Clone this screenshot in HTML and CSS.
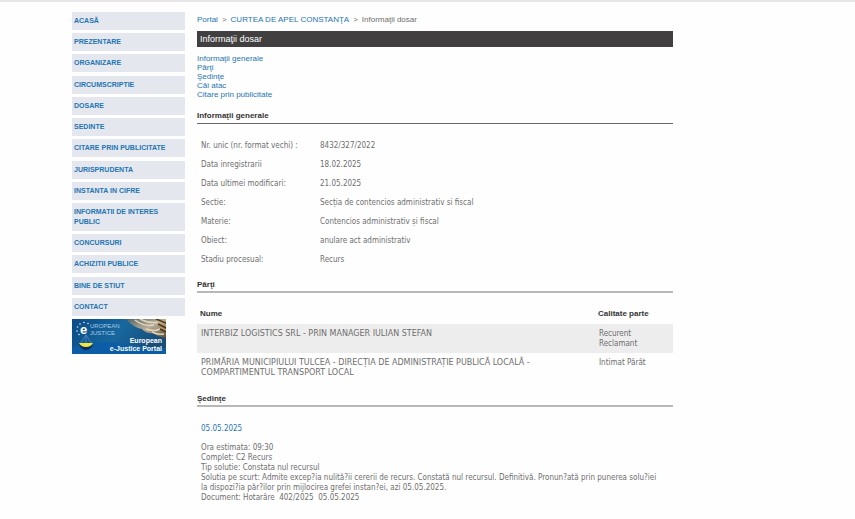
FILE: index.html
```html
<!DOCTYPE html>
<html lang="ro">
<head>
    <meta charset="UTF-8">
    <meta name="viewport" content="width=device-width, initial-scale=1.0">
    <title>Informaţii dosar</title>
    <link rel="stylesheet" href="styles.css">
</head>
<body>
    <div class="page">
        <div class="sidebar">
            <nav class="menu">
                <a href="#">ACASĂ</a>
                <a href="#">PREZENTARE</a>
                <a href="#">ORGANIZARE</a>
                <a href="#">CIRCUMSCRIPTIE</a>
                <a href="#">DOSARE</a>
                <a href="#">SEDINTE</a>
                <a href="#">CITARE PRIN PUBLICITATE</a>
                <a href="#">JURISPRUDENTA</a>
                <a href="#">INSTANTA IN CIFRE</a>
                <a href="#">INFORMATII DE INTERES PUBLIC</a>
                <a href="#">CONCURSURI</a>
                <a href="#">ACHIZITII PUBLICE</a>
                <a href="#">BINE DE STIUT</a>
                <a href="#">CONTACT</a>
            </nav>
            <a href="#" class="banner">
                <svg width="94" height="35" viewBox="0 0 94 35">
                    <defs>
                        <linearGradient id="sky" x1="0" y1="0" x2="1" y2="0.3">
                            <stop offset="0" stop-color="#0b4a86"/>
                            <stop offset="0.55" stop-color="#17689f"/>
                            <stop offset="1" stop-color="#174d79"/>
                        </linearGradient>
                        <linearGradient id="stone" x1="0" y1="0" x2="1" y2="1">
                            <stop offset="0" stop-color="#4f6466"/>
                            <stop offset="0.5" stop-color="#b9ae98"/>
                            <stop offset="1" stop-color="#5c4c34"/>
                        </linearGradient>
                    </defs>
                    <rect width="94" height="35" fill="url(#sky)"/>
                    <path d="M0 28 Q28 19 60 26 T94 28 V35 H0Z" fill="#0c5da5"/>
                    <path d="M54 0 H94 V19 Q86 18 81 14 Q74 15 70 10 Q62 9 54 0Z" fill="url(#stone)"/>
                    <path d="M63 1 Q72 8 82 6 M68 0 Q78 5 86 3 M74 10 Q82 13 88 10 M80 13 Q86 16 92 15" fill="none" stroke="#e0d5bd" stroke-width="1.5"/>
                    <path d="M84 0 L94 4 M86 5 L94 9 M88 10 L94 13" fill="none" stroke="#4a3820" stroke-width="1.6"/>
                    <path d="M86 2 L94 6 M88 8 L94 11" fill="none" stroke="#c79a4c" stroke-width="1"/>
                    <g fill="#d8e6f2">
                        <circle cx="12" cy="3.5" r="0.8"/>
                        <circle cx="8" cy="5" r="0.8"/>
                        <circle cx="5.5" cy="8" r="0.8"/>
                        <circle cx="5" cy="12" r="0.8"/>
                        <circle cx="7" cy="15.5" r="0.8"/>
                        <circle cx="16" cy="4.5" r="0.8"/>
                    </g>
                    <path d="M14 16 L8 25 M14 16 L20 25 M14 16 V25" stroke="#5d93bd" stroke-width="0.7"/>
                    <path d="M7 25 H21 Q19 31 14 31 Q9 31 7 25Z" fill="#082c60"/>
                    <path d="M7 24 H21 Q19 28 14 28 Q9 28 7 24Z" fill="#f3e53c"/>
                    <text x="8" y="15" class="banner-e">e</text>
                    <text x="18" y="9" class="banner-small">UROPEAN</text>
                    <text x="18" y="16" class="banner-small">JUSTICE</text>
                    <text x="90" y="24" class="banner-title">European</text>
                    <text x="90" y="32" class="banner-title">e-Justice Portal</text>
                </svg>
            </a>
        </div>

        <main class="content">
            <div class="breadcrumb">
                <a href="#">Portal</a>
                <span>&gt;</span>
                <a href="#">CURTEA DE APEL CONSTANŢA</a>
                <span>&gt;</span>
                <span>Informaţii dosar</span>
            </div>
            <h1>Informaţii dosar</h1>
            <ul class="anchors">
                <li><a href="#general">Informaţii generale</a></li>
                <li><a href="#parti">Părţi</a></li>
                <li><a href="#sedinte">Şedinţe</a></li>
                <li><a href="#">Căi atac</a></li>
                <li><a href="#">Citare prin publicitate</a></li>
            </ul>

            <h2 class="dark-line" id="general">Informaţii generale</h2>
            <table class="info">
                <tr><th scope="row">Nr. unic (nr. format vechi) :</th><td>8432/327/2022</td></tr>
                <tr><th scope="row">Data inregistrarii</th><td>18.02.2025</td></tr>
                <tr><th scope="row">Data ultimei modificari:</th><td>21.05.2025</td></tr>
                <tr><th scope="row">Sectie:</th><td>Secția de contencios administrativ si fiscal</td></tr>
                <tr><th scope="row">Materie:</th><td>Contencios administrativ și fiscal</td></tr>
                <tr><th scope="row">Obiect:</th><td>anulare act administrativ</td></tr>
                <tr><th scope="row">Stadiu procesual:</th><td>Recurs</td></tr>
            </table>

            <h2 id="parti">Părţi</h2>
            <table class="parties">
                <thead>
                    <tr><th scope="col">Nume</th><th scope="col" class="role">Calitate parte</th></tr>
                </thead>
                <tbody>
                    <tr>
                        <td class="name">INTERBIZ LOGISTICS SRL - PRIN MANAGER IULIAN STEFAN</td>
                        <td>Recurent<br>Reclamant</td>
                    </tr>
                    <tr>
                        <td class="name">PRIMĂRIA MUNICIPIULUI TULCEA - DIRECȚIA DE ADMINISTRAȚIE PUBLICĂ LOCALĂ -<br>COMPARTIMENTUL TRANSPORT LOCAL</td>
                        <td>Intimat Pârât</td>
                    </tr>
                </tbody>
            </table>

            <h2 id="sedinte">Şedinţe</h2>
            <div class="hearing">
                <a href="#">05.05.2025</a>
                <p>
                    Ora estimata: 09:30<br>
                    Complet: C2 Recurs<br>
                    Tip solutie: Constata nul recursul<br>
                    Solutia pe scurt: Admite excep?ia nulită?ii cererii de recurs. Constată nul recursul. Definitivă. Pronun?ată prin punerea solu?iei la dispozi?ia păr?ilor prin mijlocirea grefei instan?ei, azi 05.05.2025.<br>
                    Document: Hotarâre&nbsp; 402/2025&nbsp; 05.05.2025
                </p>
            </div>
        </main>
    </div>
</body>
</html>
```
FILE: styles.css
```css
body {
    margin: 0;
    border-top: 2px solid #e6e6e6;
    background-color: #fefefe;
    color: #6e6e6e;
    font-family: "DejaVu Sans Condensed", "DejaVu Sans", sans-serif;
    font-size: 8px;
    line-height: 10px;
}

a {
    color: #1f75b3;
    text-decoration: none;
}

a:hover {
    text-decoration: underline;
}

.page {
    display: flex;
    gap: 12px;
    padding: 10px 182px 12px 72px;
}

.sidebar {
    flex: 0 0 113px;
}

.menu {
    display: flex;
    flex-direction: column;
    justify-content: space-between;
    min-height: 304px;
}

.menu a {
    padding: 4px 2px;
    background-color: #e4e7ed;
    font-family: "Liberation Sans", Arial, sans-serif;
    font-size: 7px;
    font-weight: bold;
}

.banner {
    display: block;
    margin-top: 3px;
}

.banner svg {
    display: block;
}

.banner text {
    fill: white;
    font-family: "Liberation Sans", Arial, sans-serif;
}

.banner .banner-e {
    font-size: 13px;
    font-weight: bold;
}

.banner .banner-small {
    fill: #a9cbe6;
    font-size: 6px;
}

.banner .banner-title {
    font-size: 7px;
    font-weight: bold;
    text-anchor: end;
}

.content {
    flex: 1;
    min-width: 0;
}

.breadcrumb, .anchors, h1, h2, .parties th {
    font-family: "Liberation Sans", Arial, sans-serif;
}

.breadcrumb {
    display: flex;
    gap: 4px;
    padding: 3px 0 6px;
}

h1 {
    margin: 0;
    padding: 3px;
    background-color: #413f40;
    color: white;
    font-size: 9px;
    font-weight: normal;
}

.anchors {
    margin: 7px 0 12px;
    padding: 0;
    list-style: none;
    line-height: 9px;
}

h2 {
    margin: 0;
    padding-bottom: 1px;
    border-bottom: 2px solid #b8b8b8;
    color: #333;
    font-size: 8px;
}

.dark-line {
    padding-bottom: 2px;
    border-bottom: 1px solid #666;
}

table {
    width: 100%;
    border-collapse: collapse;
}

th, td {
    padding: 5px 4px 4px;
    text-align: left;
    vertical-align: top;
}

.info {
    margin: 12px 0 11px;
}

.info th {
    width: 111px;
    font-weight: normal;
}

.parties {
    margin: 12px 0;
}

.parties th {
    padding: 4px 3px 5px;
    color: #333;
}

.parties .role {
    width: 72px;
}

.parties .name {
    font-family: "DejaVu Sans", sans-serif;
}

.parties tbody tr:nth-child(odd) {
    background-color: #ededed;
}

.hearing {
    padding: 17px 12px 0 4px;
}

.hearing p {
    margin: 9px 0 0;
}
```
